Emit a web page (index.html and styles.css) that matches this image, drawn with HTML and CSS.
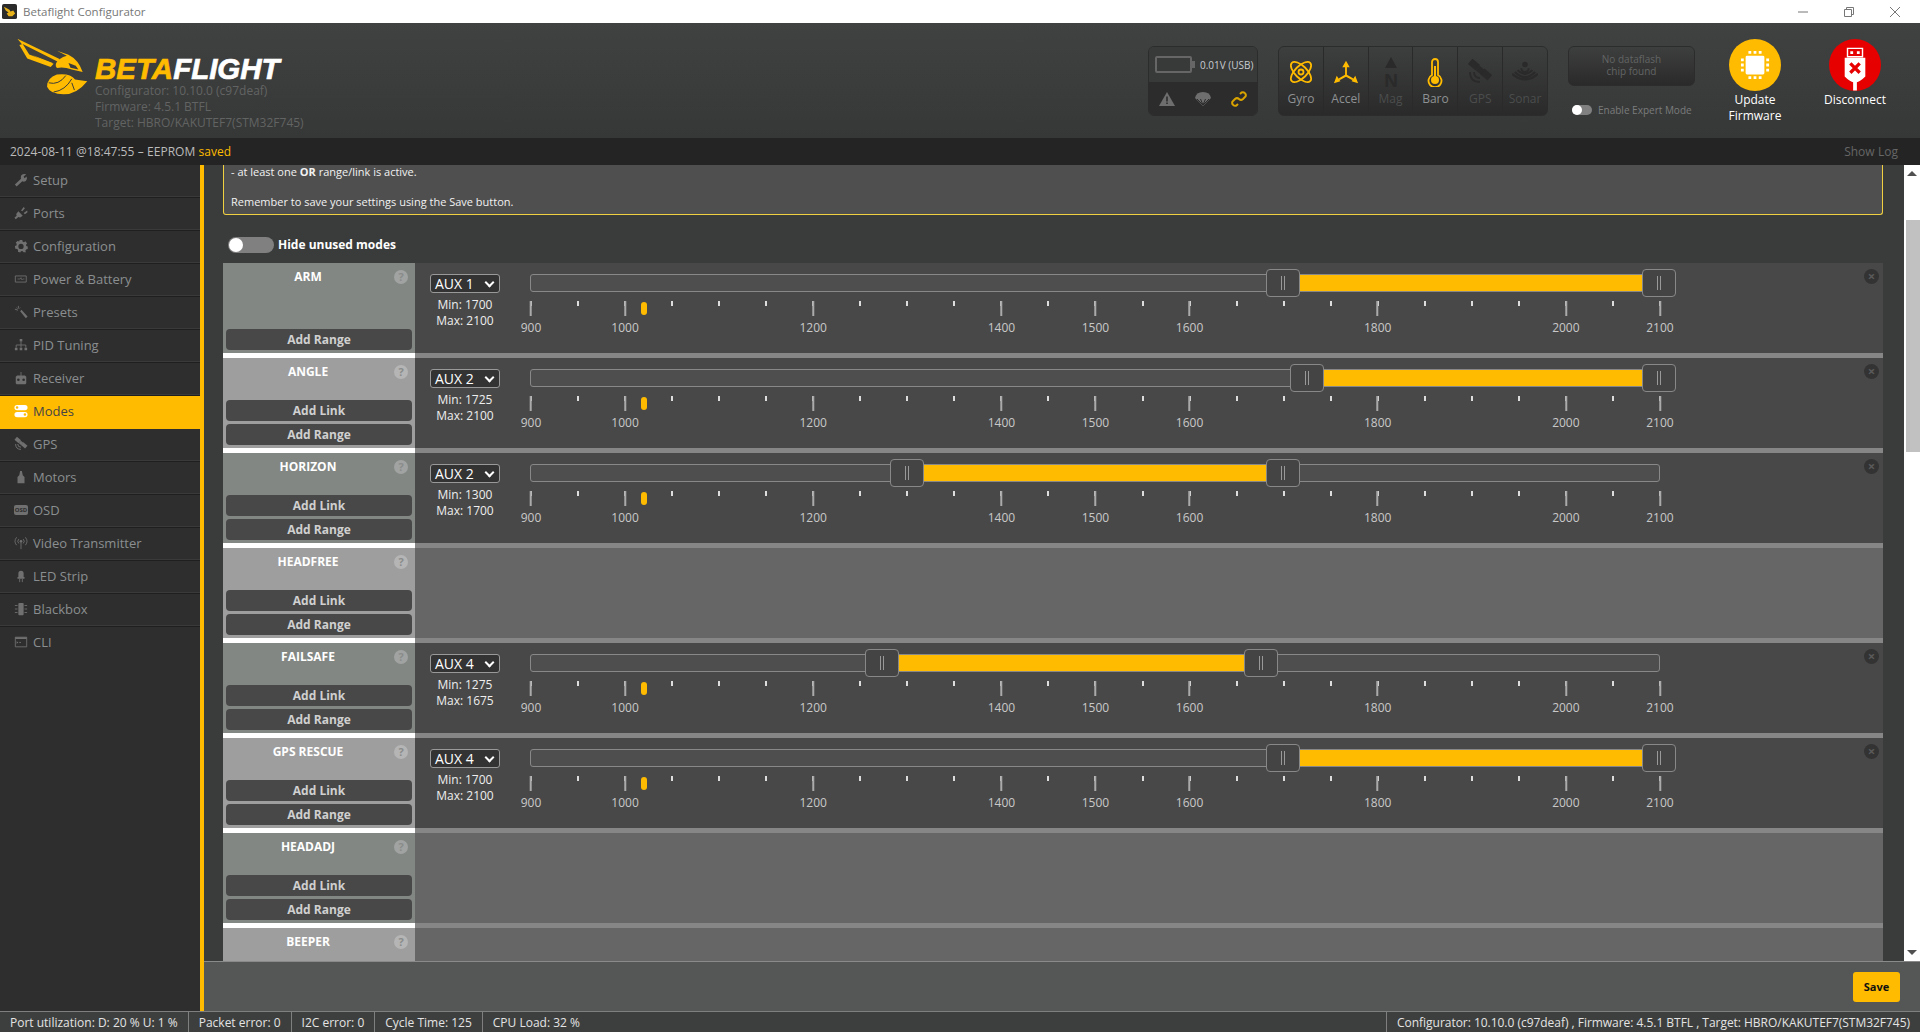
FILE: index.html
```html
<!DOCTYPE html>
<html lang="en">
<head>
    <meta charset="UTF-8">
    <title>Betaflight Configurator</title>
    <link rel="stylesheet" href="styles.css">
</head>
<body>

    <div class="titlebar">
        <svg class="app-icon" viewBox="0 0 16 16"><rect width="16" height="16" rx="2" fill="#2b2b2b"/><path d="M2 3l6 3 1 2 3-1 2 3-3 3H7L5 10l2-1-3-2z" fill="#e8b21a"/></svg>
        <span class="app-title">Betaflight Configurator</span>
        <div class="window-controls">
            <svg viewBox="0 0 12 12"><path d="M1 6h10" stroke="#777" fill="none"/></svg>
            <svg viewBox="0 0 12 12"><path d="M1.500 3.500h7v7h-7zM3.500 3.500v-2h7v7h-2" stroke="#777" fill="none"/></svg>
            <svg viewBox="0 0 12 12"><path d="M1 1l10 10M11 1L1 11" stroke="#777" fill="none"/></svg>
        </div>
    </div>

    <header class="header">
        <div class="brand">
            <svg class="bee" viewBox="40 105 230 185">
                <path d="M50 116l128 62-5 8L66 132l20 32 74 28-9 10-71-26-24-41 8-2z" fill="#ffbb00"/>
                <path d="M95 166l62 24-5 5z" fill="#ffbb00"/>
                <path d="M170 153l35 12q30 15 43 52l-33-7q-25-10-45-5-10-10 5-25 15-10 25-12z" fill="#ffbb00"/>
                <path d="M205 190l22 8 8 12-24-6z" fill="#3a3c3b"/>
                <path d="M262 245q-32 40-72 40-40 0-50-23 0-27 30-37 40-5 55 15z" fill="#ffbb00"/>
                <path d="M145 250q30 8 52-22M160 278q35-5 55-40M215 250l8 22" stroke="#3a3c3b" stroke-width="3" fill="none"/>
            </svg>
            <div class="brand-text">
                <div class="wordmark"><span class="beta">BETA</span>FLIGHT</div>
                <div class="versions">
                    <div>Configurator: 10.10.0 (c97deaf)</div>
                    <div>Firmware: 4.5.1 BTFL</div>
                    <div>Target: HBRO/KAKUTEF7(STM32F745)</div>
                </div>
            </div>
        </div>

        <div class="battery-panel">
            <div class="battery-top">
                <div class="battery"></div>
                <span>0.01V (USB)</span>
            </div>
            <div class="battery-bottom">
                <svg viewBox="0 0 16 16"><path d="M8 1l8 14H0z" fill="#6e6e6e"/><path d="M7.200 5.500h1.600v5H7.200zM7.200 11.500h1.600v1.600H7.200z" fill="#2c2c2c"/></svg>
                <svg viewBox="0 0 16 16"><path d="M0 7Q1 1 8 1t8 6L8 15z" fill="#6e6e6e"/><path d="M2 8l6 6 6-6M5.500 8L8 14l2.500-6" stroke="#2c2c2c" fill="none"/></svg>
                <svg viewBox="0 0 16 16"><path d="M9 3l1.500-1.500a3 3 0 014 4L12 8a3 3 0 01-4 0M7 13l-1.500 1.500a3 3 0 01-4-4L4 8a3 3 0 014 0" stroke="#d9a300" stroke-width="2" fill="none"/></svg>
            </div>
        </div>

        <div class="sensors">
            <div class="sensor on">
                <svg viewBox="0 0 26 26"><g fill="none" stroke="#ffbb00" stroke-width="1.800"><ellipse cx="13" cy="13" rx="13" ry="6" transform="rotate(45 13 13)"/><ellipse cx="13" cy="13" rx="13" ry="6" transform="rotate(-45 13 13)"/><circle cx="13" cy="13" r="2.500"/></g></svg>
                Gyro
            </div>
            <div class="sensor on">
                <svg viewBox="0 0 28 26"><g fill="#ffbb00"><path d="M14 1l4 7h-8zM1 25l3-8 4 6zM27 25l-3-8-4 6z"/><path d="M13 7h2v9l7 4-1 2-7-4-7 4-1-2 7-4z"/></g></svg>
                Accel
            </div>
            <div class="sensor">
                <svg class="mag-icon" viewBox="0 0 26 34"><path d="M13 0l6 11H7z" fill="#2a2a2a"/><text x="13" y="30" class="mag-n">N</text></svg>
                Mag
            </div>
            <div class="sensor on">
                <svg viewBox="0 0 26 28"><path d="M10 17V4a3 3 0 016 0v13a6.500 6.500 0 11-6 0z" fill="none" stroke="#ffbb00" stroke-width="1.800"/><circle cx="13" cy="22" r="4" fill="#ffbb00"/><path d="M12 8h2v12h-2z" fill="#ffbb00"/></svg>
                Baro
            </div>
            <div class="sensor">
                <svg viewBox="0 0 26 26"><use href="#sat" fill="#2a2a2a" stroke="#2a2a2a"/></svg>
                GPS
            </div>
            <div class="sensor">
                <svg viewBox="0 0 28 24"><g fill="none" stroke="#2a2a2a" stroke-width="2.200"><path d="M10 8a4 4 0 008 0M6 10q8 8 16 0M3 12q11 11 22 0M0 14q14 12 28 0"/></g><circle cx="14" cy="4" r="3" fill="#2a2a2a"/></svg>
                Sonar
            </div>
        </div>

        <div class="flash-col">
            <div class="dataflash">No dataflash<br>chip found</div>
            <div class="expert">
                <span class="expert-toggle"></span>
                Enable Expert Mode
            </div>
        </div>

        <div class="round-btn">
            <div class="circle update">
                <svg viewBox="0 0 32 32"><rect x="6" y="6" width="20" height="20" rx="1.500" fill="#fff"/><path d="M9 1h3v3H9zM14.500 1h3v3h-3zM20 1h3v3h-3zM9 28h3v3H9zM14.500 28h3v3h-3zM20 28h3v3h-3zM1 9h3v3H1zM1 14.500h3v3H1zM1 20h3v3H1zM28 9h3v3h-3zM28 14.500h3v3h-3zM28 20h3v3h-3z" fill="#fff"/></svg>
            </div>
            Update<br>Firmware
        </div>
        <div class="round-btn">
            <div class="circle disconnect">
                <svg viewBox="0 0 32 46"><path d="M8 1h16v9H8z" fill="none" stroke="#fff" stroke-width="1.500"/><path d="M11 4h3v3h-3zM18 4h3v3h-3zM5 11h22v20q-5 5-9 6v9h-4v-9q-4-1-9-6z" fill="#fff"/><path d="M11 17l10 10M21 17L11 27" stroke="#e60000" stroke-width="3.500"/></svg>
            </div>
            Disconnect
        </div>
    </header>

    <div class="logbar">
        <span>2024-08-11 @18:47:55 &ndash; EEPROM <em>saved</em></span>
        <span class="show-log">Show Log</span>
    </div>

    <svg class="defs">
        <symbol id="sat" viewBox="0 0 26 26">
            <rect stroke-width="0" x="2" y="2" width="10" height="7" transform="rotate(40 7 5.500)"/>
            <rect stroke-width="0" x="14" y="12" width="10" height="7" transform="rotate(40 19 15.500)"/>
            <rect stroke-width="0" x="10" y="8" width="6" height="6" transform="rotate(40 13 11)"/>
            <path d="M7 13q0 6 6 6M3 13q0 10 10 10" fill="none" stroke-width="1.800"/>
        </symbol>
    </svg>

    <div class="main">
        <nav class="sidebar">
            <a class="tab"><svg viewBox="0 0 16 16"><path d="M1 13L8 6.500Q7 3 10 1.500q2-.8 4 0L11 4l1 2 2.500-2q1 3-1 5-2 1.500-4 .5L3 15.500z"/></svg>Setup</a>
            <a class="tab"><svg viewBox="0 0 16 16"><path d="M5 6l5 5-3 2-2-.5L2 15l-1.500-1.500L3 11l-.5-2zM8 5l3-4 1.500 1.500L9.500 6zM11 8l4-3 .5 2-3 2.500z"/></svg>Ports</a>
            <a class="tab"><svg viewBox="0 0 16 16"><path fill-rule="evenodd" d="M6.500 1h3l.4 2 1.500.7L13 2.500 15 5l-1.300 1.500.3 1.500 1.700.5v3l-1.900.5-.8 1.400.6 1.600L11 15l-1.500-1.200-1.500.2-1 1.500-2.500-1 .2-2-1.100-1L1.500 11 1 8l1.800-.7.3-1.500L2 4l2.500-2 1.300 1.200z M8 5.500a3 3 0 100 6 3 3 0 000-6z"/></svg>Configuration</a>
            <a class="tab"><svg viewBox="0 0 16 16"><path fill="none" stroke="#707070" d="M1.500 4.500h12.500v7H1.500z"/><path fill="none" stroke="#707070" stroke-width=".8" d="M4 8h3l1-1.500L9 9l1-1h2"/></svg>Power &amp; Battery</a>
            <a class="tab"><svg viewBox="0 0 16 16"><path d="M7 7l1.500-1.500 7 7.500-2 2z"/><path d="M5 1v3M1 5h3M7 3l-1 1M3 3l1 1M3 7l1-1" stroke="#707070" fill="none"/></svg>Presets</a>
            <a class="tab"><svg viewBox="0 0 16 16"><path d="M6.500 1h3v3h-3zM1 11h3v3H1zM6.500 11h3v3h-3zM12 11h3v3h-3z"/><path d="M8 4v7M2.500 11V8h11v3" fill="none" stroke="#707070"/></svg>PID Tuning</a>
            <a class="tab"><svg viewBox="0 0 16 16"><path fill-rule="evenodd" d="M7.500 1h1v4h4l1.500 1.500V14l-1 1H3l-1-1V6.500L3.500 5h4zM5 8.500a1.500 1.500 0 100 3 1.500 1.500 0 000-3zm6 0a1.500 1.500 0 100 3 1.500 1.500 0 000-3z"/></svg>Receiver</a>
            <a class="tab active"><svg viewBox="0 0 16 16"><path fill="#fff" fill-rule="evenodd" d="M3.500 1h9a3 3 0 010 6h-9a3 3 0 010-6zm0 1.500a1.500 1.500 0 100 3 1.500 1.500 0 000-3zM3.500 9h9a3 3 0 010 6h-9a3 3 0 010-6zm9 1.500a1.500 1.500 0 100 3 1.500 1.500 0 000-3z"/></svg>Modes</a>
            <a class="tab"><svg viewBox="0 0 26 26"><use href="#sat" stroke="#707070"/></svg>GPS</a>
            <a class="tab"><svg viewBox="0 0 16 16"><path d="M7 1h2l1 5 2 2v7H4V8l2-2z"/></svg>Motors</a>
            <a class="tab"><span class="osd-icon">OSD</span>OSD</a>
            <a class="tab"><svg viewBox="0 0 16 16"><circle cx="8" cy="6" r="1.500"/><path d="M8 7v8M5.500 3.500a3.500 3.500 0 000 5M10.500 3.500a3.500 3.500 0 010 5M3 1.500a7 7 0 000 9M13 1.500a7 7 0 010 9" fill="none" stroke="#707070"/></svg>Video Transmitter</a>
            <a class="tab"><svg viewBox="0 0 16 16"><path d="M5 5a3 3 0 016 0v4H5zM4 9h8v2H4z"/><path d="M6.500 11v4M9.500 11v4" stroke="#707070" fill="none"/></svg>LED Strip</a>
            <a class="tab"><svg viewBox="0 0 16 16"><rect x="5" y="1" width="6" height="14" rx="1"/><path d="M1 4h3M1 8h3M1 12h3M12 4h3M12 8h3M12 12h3" stroke="#707070" fill="none"/></svg>Blackbox</a>
            <a class="tab"><svg viewBox="0 0 16 16"><path fill="none" stroke="#707070" d="M1.500 2.500h13v11h-13z"/><path d="M1.500 2.500h13v2h-13zM3 7l2 1.500L3 10z"/><path d="M6 8.500h2" stroke="#707070"/></svg>CLI</a>
        </nav>

        <div class="tab-area">
            <div class="tab-scroll">
                <div class="content">
                    <div class="note">
                        <p>- at least one <strong>OR</strong> range/link is active.</p>
                        <p class="note-last">Remember to save your settings using the Save button.</p>
                    </div>

                    <div class="hide-unused">
                        <span class="switch"></span>
                        <strong>Hide unused modes</strong>
                    </div>

                    <div class="mode">
                        <div class="mode-name">
                            <div class="name">ARM</div><span class="help">?</span>
                            <div class="mode-btns"><div class="btn">Add Range</div></div>
                        </div>
                        <div class="mode-range">
                            <div class="channel">
                                <div class="aux">AUX 1<i class="chevron"></i></div>
                                <div class="minmax">Min: 1700<br>Max: 2100</div>
                            </div>
                            <div class="slider">
                                <div class="track">
                                    <div class="connect" style="left: 66.67%; right: 0"></div>
                                    <div class="handle" style="left: 66.67%"></div>
                                    <div class="handle" style="left: 100%"></div>
                                </div>
                                <div class="scale">
                                    <span class="marker"></span>
                                    <span class="pip p900">900</span><span class="pip p1000">1000</span><span class="pip p1200">1200</span><span class="pip p1400">1400</span><span class="pip p1500">1500</span><span class="pip p1600">1600</span><span class="pip p1800">1800</span><span class="pip p2000">2000</span><span class="pip p2100">2100</span>
                                </div>
                            </div>
                            <span class="remove">&times;</span>
                        </div>
                    </div>

                    <div class="mode">
                        <div class="mode-name">
                            <div class="name">ANGLE</div><span class="help">?</span>
                            <div class="mode-btns"><div class="btn">Add Link</div><div class="btn">Add Range</div></div>
                        </div>
                        <div class="mode-range">
                            <div class="channel">
                                <div class="aux">AUX 2<i class="chevron"></i></div>
                                <div class="minmax">Min: 1725<br>Max: 2100</div>
                            </div>
                            <div class="slider">
                                <div class="track">
                                    <div class="connect" style="left: 68.75%; right: 0"></div>
                                    <div class="handle" style="left: 68.75%"></div>
                                    <div class="handle" style="left: 100%"></div>
                                </div>
                                <div class="scale">
                                    <span class="marker"></span>
                                    <span class="pip p900">900</span><span class="pip p1000">1000</span><span class="pip p1200">1200</span><span class="pip p1400">1400</span><span class="pip p1500">1500</span><span class="pip p1600">1600</span><span class="pip p1800">1800</span><span class="pip p2000">2000</span><span class="pip p2100">2100</span>
                                </div>
                            </div>
                            <span class="remove">&times;</span>
                        </div>
                    </div>

                    <div class="mode">
                        <div class="mode-name">
                            <div class="name">HORIZON</div><span class="help">?</span>
                            <div class="mode-btns"><div class="btn">Add Link</div><div class="btn">Add Range</div></div>
                        </div>
                        <div class="mode-range">
                            <div class="channel">
                                <div class="aux">AUX 2<i class="chevron"></i></div>
                                <div class="minmax">Min: 1300<br>Max: 1700</div>
                            </div>
                            <div class="slider">
                                <div class="track">
                                    <div class="connect" style="left: 33.33%; right: 33.33%"></div>
                                    <div class="handle" style="left: 33.33%"></div>
                                    <div class="handle" style="left: 66.67%"></div>
                                </div>
                                <div class="scale">
                                    <span class="marker"></span>
                                    <span class="pip p900">900</span><span class="pip p1000">1000</span><span class="pip p1200">1200</span><span class="pip p1400">1400</span><span class="pip p1500">1500</span><span class="pip p1600">1600</span><span class="pip p1800">1800</span><span class="pip p2000">2000</span><span class="pip p2100">2100</span>
                                </div>
                            </div>
                            <span class="remove">&times;</span>
                        </div>
                    </div>

                    <div class="mode unused">
                        <div class="mode-name">
                            <div class="name">HEADFREE</div><span class="help">?</span>
                            <div class="mode-btns"><div class="btn">Add Link</div><div class="btn">Add Range</div></div>
                        </div>
                        <div class="mode-range"></div>
                    </div>

                    <div class="mode">
                        <div class="mode-name">
                            <div class="name">FAILSAFE</div><span class="help">?</span>
                            <div class="mode-btns"><div class="btn">Add Link</div><div class="btn">Add Range</div></div>
                        </div>
                        <div class="mode-range">
                            <div class="channel">
                                <div class="aux">AUX 4<i class="chevron"></i></div>
                                <div class="minmax">Min: 1275<br>Max: 1675</div>
                            </div>
                            <div class="slider">
                                <div class="track">
                                    <div class="connect" style="left: 31.15%; right: 35.32%"></div>
                                    <div class="handle" style="left: 31.15%"></div>
                                    <div class="handle" style="left: 64.68%"></div>
                                </div>
                                <div class="scale">
                                    <span class="marker"></span>
                                    <span class="pip p900">900</span><span class="pip p1000">1000</span><span class="pip p1200">1200</span><span class="pip p1400">1400</span><span class="pip p1500">1500</span><span class="pip p1600">1600</span><span class="pip p1800">1800</span><span class="pip p2000">2000</span><span class="pip p2100">2100</span>
                                </div>
                            </div>
                            <span class="remove">&times;</span>
                        </div>
                    </div>

                    <div class="mode">
                        <div class="mode-name">
                            <div class="name">GPS RESCUE</div><span class="help">?</span>
                            <div class="mode-btns"><div class="btn">Add Link</div><div class="btn">Add Range</div></div>
                        </div>
                        <div class="mode-range">
                            <div class="channel">
                                <div class="aux">AUX 4<i class="chevron"></i></div>
                                <div class="minmax">Min: 1700<br>Max: 2100</div>
                            </div>
                            <div class="slider">
                                <div class="track">
                                    <div class="connect" style="left: 66.67%; right: 0"></div>
                                    <div class="handle" style="left: 66.67%"></div>
                                    <div class="handle" style="left: 100%"></div>
                                </div>
                                <div class="scale">
                                    <span class="marker"></span>
                                    <span class="pip p900">900</span><span class="pip p1000">1000</span><span class="pip p1200">1200</span><span class="pip p1400">1400</span><span class="pip p1500">1500</span><span class="pip p1600">1600</span><span class="pip p1800">1800</span><span class="pip p2000">2000</span><span class="pip p2100">2100</span>
                                </div>
                            </div>
                            <span class="remove">&times;</span>
                        </div>
                    </div>

                    <div class="mode unused">
                        <div class="mode-name">
                            <div class="name">HEADADJ</div><span class="help">?</span>
                            <div class="mode-btns"><div class="btn">Add Link</div><div class="btn">Add Range</div></div>
                        </div>
                        <div class="mode-range"></div>
                    </div>

                    <div class="mode unused">
                        <div class="mode-name">
                            <div class="name">BEEPER</div><span class="help">?</span>
                        </div>
                        <div class="mode-range"></div>
                    </div>
                </div>

                <div class="scrollbar">
                    <span class="arrow-up"></span>
                    <span class="thumb"></span>
                    <span class="arrow-down"></span>
                </div>
            </div>

            <div class="toolbar">
                <div class="save">Save</div>
            </div>
        </div>
    </div>

    <footer class="statusbar">
        <span>Port utilization: D: 20 % U: 1 %</span>
        <span>Packet error: 0</span>
        <span>I2C error: 0</span>
        <span>Cycle Time: 125</span>
        <span class="last">CPU Load: 32 %</span>
        <span class="build">Configurator: 10.10.0 (c97deaf) , Firmware: 4.5.1 BTFL , Target: HBRO/KAKUTEF7(STM32F745)</span>
    </footer>

</body>
</html>
```

FILE: styles.css
```css
body {
    font-family: "Open Sans", sans-serif;
    font-size: 12px;
    margin: 0;
    height: 1032px;
    overflow: hidden;
    display: flex;
    flex-direction: column;
    background-color: #3a3c3b;
}

/* window frame */
.titlebar {
    height: 23px;
    flex: none;
    background-color: #fff;
    display: flex;
    align-items: center;
    padding-left: 2px;
    color: #777;
}

.app-icon {
    width: 15px;
    height: 15px;
    margin-right: 6px;
}

.app-title {
    font-size: 11.500px;
}

.window-controls {
    margin-left: auto;
    display: flex;
    gap: 34px;
    padding-right: 19px;
}

.window-controls svg {
    width: 12px;
    height: 12px;
}

.defs {
    display: none;
}

/* header */
.header {
    height: 115px;
    flex: none;
    display: flex;
    background: linear-gradient(#404241, #363737);
    color: #fff;
    box-sizing: border-box;
    padding-right: 15px;
}

.brand {
    display: flex;
    margin-right: auto;
    padding-left: 14px;
}

.bee {
    width: 76px;
    height: 61px;
    margin-top: 12px;
    margin-right: 5px;
}

.brand-text {
    padding-top: 31px;
}

.wordmark {
    font-family: "Liberation Sans", sans-serif;
    font-weight: bold;
    font-style: italic;
    font-size: 29.500px;
    line-height: 30px;
    -webkit-text-stroke: 0.7px currentColor;
    height: 29px;
}

.beta {
    color: #ffbb00;
}

.versions {
    color: #626463;
    line-height: 16px;
}

.battery-panel {
    width: 110px;
    height: 70px;
    margin-top: 23px;
    margin-right: 20px;
    border-radius: 6px;
    border: 1px solid #2c2c2c;
    box-sizing: border-box;
    overflow: hidden;
}

.battery-top {
    height: 35px;
    display: flex;
    align-items: center;
    padding-left: 6px;
    font-size: 10px;
    color: #c8ccd0;
    background-color: #383a39;
}

.battery {
    width: 33px;
    height: 13px;
    border: 2px solid #666;
    border-radius: 2px;
    margin-right: 8px;
    position: relative;
}

.battery::after {
    content: "";
    position: absolute;
    right: -5px;
    top: 3px;
    width: 3px;
    height: 7px;
    background-color: #666;
}

.battery-bottom {
    height: 34px;
    background-color: #2c2c2c;
    display: flex;
    align-items: center;
    justify-content: space-between;
    padding: 0 10px;
}

.battery-bottom svg {
    width: 16px;
    height: 16px;
}

.sensors {
    width: 270px;
    height: 70px;
    margin-top: 23px;
    margin-right: 20px;
    display: flex;
    border-radius: 6px;
    border: 1px solid #2c2c2c;
    box-sizing: border-box;
    background: linear-gradient(#3d3f3e, #2a2a2a);
    overflow: hidden;
}

.sensor {
    flex: 1;
    display: flex;
    flex-direction: column;
    align-items: center;
    color: #4b4d4d;
    border-left: 1px solid #2a2a2a;
    padding-top: 10px;
}

.sensor:first-child {
    border-left: none;
}

.sensor.on {
    color: #8e9193;
}

.sensor svg {
    width: 26px;
    height: 30px;
    margin-bottom: 3px;
    fill: #2a2a2a;
}

.sensor .mag-icon {
    height: 34px;
    margin-bottom: -1px;
}

.mag-n {
    font-family: "Liberation Sans", sans-serif;
    font-weight: bold;
    font-size: 19px;
    text-anchor: middle;
    fill: #2a2a2a;
}

.flash-col {
    width: 127px;
    margin-top: 23px;
    margin-right: 10px;
}

.dataflash {
    height: 40px;
    box-sizing: border-box;
    border: 1px solid #2c2c2c;
    border-radius: 6px;
    background: linear-gradient(#3d3f3e, #2a2a2a);
    color: #636565;
    font-size: 10px;
    line-height: 12px;
    text-align: center;
    padding-top: 6px;
}

.expert {
    display: flex;
    align-items: center;
    margin-top: 17px;
    padding-left: 4px;
    font-size: 10px;
    color: #7a7c7c;
}

.expert-toggle {
    width: 20px;
    height: 10px;
    border-radius: 5px;
    background-color: #808080;
    margin-right: 6px;
    position: relative;
}

.expert-toggle::after {
    content: "";
    position: absolute;
    left: 0;
    top: 0;
    width: 10px;
    height: 10px;
    border-radius: 50%;
    background-color: #fff;
}

.round-btn {
    width: 100px;
    text-align: center;
    line-height: 16px;
    padding-top: 16px;
    font-size: 12px;
}

.circle {
    width: 52px;
    height: 52px;
    border-radius: 50%;
    margin: 0 auto 1px;
    display: flex;
    align-items: center;
    justify-content: center;
}

.update {
    background-color: #ffbb00;
}

.update svg {
    width: 30px;
    height: 30px;
}

.disconnect {
    background-color: #e60000;
    align-items: flex-end;
}

.disconnect svg {
    width: 30px;
    height: 44px;
}

/* log line */
.logbar {
    height: 27px;
    flex: none;
    background-color: #242424;
    color: #bbb;
    display: flex;
    justify-content: space-between;
    align-items: center;
    padding: 0 22px 0 10px;
    word-spacing: 0.3px;
}

.logbar em {
    font-style: normal;
    color: #ffbb00;
}

.show-log {
    color: #666;
}

/* main area */
.main {
    flex: 1;
    display: flex;
    min-height: 0;
}

.sidebar {
    width: 200px;
    flex: none;
    background-color: #2e2e2e;
    border-right: 4px solid #ffbb00;
}

.tab {
    height: 33px;
    box-sizing: border-box;
    display: flex;
    align-items: center;
    padding: 0 0 2px 14px;
    font-size: 13px;
    color: #8b8e90;
    border-bottom: 1px solid #1f1f1f;
    box-shadow: inset 0 -1px 0 #3a3a3a;
}

.tab svg {
    width: 14px;
    height: 14px;
    margin-right: 5px;
    fill: #707070;
    flex: none;
}

.tab:last-child {
    border-bottom: none;
    box-shadow: none;
    padding-bottom: 4px;
}

.tab.active {
    background-color: #ffbb00;
    width: 204px;
    color: #444;
    border-bottom: none;
    box-shadow: none;
    padding-bottom: 4px;
}

.osd-icon {
    width: 14px;
    height: 10px;
    margin-right: 5px;
    background-color: #707070;
    border-radius: 2px;
    color: #2e2e2e;
    font-size: 6px;
    font-weight: bold;
    line-height: 10px;
    text-align: center;
}

.tab-area {
    flex: 1;
    display: flex;
    flex-direction: column;
    min-width: 0;
}

.tab-scroll {
    flex: 1;
    display: flex;
    min-height: 0;
}

.content {
    flex: 1;
    padding: 0 21px 0 19px;
    overflow: hidden;
}

.note {
    height: 50px;
    box-sizing: border-box;
    display: flow-root;
    background-color: #4f4f4f;
    border: 1px solid #f0d040;
    border-top: none;
    border-radius: 0 0 3px 3px;
    padding-left: 7px;
    font-size: 11px;
    line-height: 15px;
    color: #f2f2f2;
}

.note p {
    margin: -1px 0 0;
}

.note .note-last {
    margin: 0;
    padding-top: 15px;
}

.hide-unused {
    height: 48px;
    box-sizing: border-box;
    display: flex;
    align-items: center;
    padding: 11px 0 0 5px;
    color: #fff;
}

.switch {
    width: 46px;
    height: 16px;
    border-radius: 8px;
    background-color: #808080;
    margin-right: 4px;
    position: relative;
}

.switch::after {
    content: "";
    position: absolute;
    left: 1px;
    top: 1px;
    width: 14px;
    height: 14px;
    border-radius: 50%;
    background-color: #fff;
}

/* mode rows */
.mode {
    height: 95px;
    display: flex;
}

.mode-name {
    width: 192px;
    flex: none;
    box-sizing: border-box;
    position: relative;
    background-color: #9e9e9e;
    border-bottom: 5px solid #fff;
    background-clip: padding-box;
    display: flex;
    flex-direction: column;
    color: #fff;
    font-weight: bold;
}

.mode:nth-child(odd) .mode-name {
    background-color: #828784;
}

.name {
    width: 170px;
    text-align: center;
    padding-top: 5px;
    line-height: 18px;
}

.help {
    position: absolute;
    right: 7px;
    top: 7px;
    width: 14px;
    height: 14px;
    border-radius: 50%;
    background-color: #b5b5b5;
    color: #8a8c8b;
    font-size: 11px;
    line-height: 14px;
    text-align: center;
}

.mode:nth-child(odd) .help {
    background-color: #a0a3a1;
}

.mode-btns {
    margin-top: auto;
    padding: 0 3px;
    margin-bottom: 3px;
}

.btn {
    height: 21px;
    border-radius: 4px;
    background-color: #484848;
    color: #d0d0d0;
    line-height: 21px;
    text-align: center;
    margin-top: 3px;
}

.mode-range {
    flex: 1;
    position: relative;
    box-sizing: border-box;
    display: flex;
    padding: 11px 0 0 15px;
    background-color: #484848;
    border-bottom: 5px solid #868686;
    color: #eee;
}

.unused .mode-range {
    background-color: #666;
}

.channel {
    width: 70px;
    margin-right: 30px;
    flex: none;
}

.aux {
    height: 19px;
    box-sizing: border-box;
    border: 1px solid #999;
    border-radius: 3px;
    background-color: #333;
    font-size: 14px;
    line-height: 17px;
    padding-left: 4px;
    color: #fff;
    position: relative;
}

.chevron {
    position: absolute;
    right: 6px;
    top: 4px;
    width: 5px;
    height: 5px;
    border-right: 2px solid #fff;
    border-bottom: 2px solid #fff;
    transform: rotate(45deg);
}

.minmax {
    text-align: center;
    line-height: 16px;
    margin-top: 4px;
}

.slider {
    width: 1130px;
}

.track {
    height: 18px;
    box-sizing: border-box;
    border: 1px solid #888;
    border-radius: 3px;
    background-color: #4e4e4e;
    position: relative;
}

.connect {
    position: absolute;
    top: 0;
    bottom: 0;
    background-color: #ffbb00;
}

.handle {
    position: absolute;
    top: -6px;
    width: 34px;
    height: 28px;
    margin-left: -17px;
    box-sizing: border-box;
    background-color: #444;
    border: 1px solid #888;
    border-radius: 4px;
    z-index: 1;
}

.handle::before {
    content: "";
    position: absolute;
    left: 14px;
    top: 6px;
    width: 2px;
    height: 14px;
    border-left: 1px solid #999;
    border-right: 1px solid #999;
}

.scale {
    position: relative;
    height: 40px;
    margin-top: 9px;
    background: repeating-linear-gradient(90deg, #ddd 0 2px, transparent 2px 47.04px) no-repeat 0 0 / 100% 5px;
}

.marker {
    position: absolute;
    left: 111px;
    top: 1px;
    width: 6px;
    height: 13px;
    border-radius: 3px;
    background-color: #ffbb00;
}

.pip {
    position: absolute;
    top: 19px;
    transform: translateX(-50%);
    line-height: 16px;
    color: #c8c8c8;
}

.pip::before {
    content: "";
    position: absolute;
    left: 50%;
    top: -19px;
    width: 2px;
    height: 15px;
    margin-left: -1px;
    background-color: #aaa;
}

.p900 { left: 1px; }
.p1000 { left: 95.08px; }
.p1200 { left: 283.24px; }
.p1400 { left: 471.4px; }
.p1500 { left: 565.48px; }
.p1600 { left: 659.56px; }
.p1800 { left: 847.72px; }
.p2000 { left: 1035.88px; }
.p2100 { left: 1129.96px; }

.remove {
    position: absolute;
    left: 1449px;
    top: 6px;
    width: 15px;
    height: 15px;
    border-radius: 50%;
    background-color: #333;
    color: #5a5a5a;
    font-size: 13px;
    font-weight: bold;
    line-height: 15px;
    text-align: center;
}

.scrollbar {
    width: 16px;
    flex: none;
    background-color: #fff;
    position: relative;
}

.thumb {
    position: absolute;
    left: 2px;
    right: 0;
    top: 55px;
    height: 232px;
    background-color: #c1c1c1;
}

.arrow-up,
.arrow-down {
    position: absolute;
    left: 3px;
    border-left: 5px solid transparent;
    border-right: 5px solid transparent;
}

.arrow-up {
    top: 6px;
    border-bottom: 5px solid #505050;
}

.arrow-down {
    bottom: 6px;
    border-top: 5px solid #505050;
}

.toolbar {
    height: 50px;
    flex: none;
    box-sizing: border-box;
    background-color: #555756;
    border-top: 1px solid #8a8a8a;
    display: flex;
    justify-content: flex-end;
    align-items: center;
    padding-right: 20px;
}

.save {
    width: 47px;
    height: 30px;
    border-radius: 3px;
    background-color: #ffbb00;
    color: #111;
    font-size: 11px;
    font-weight: bold;
    line-height: 30px;
    text-align: center;
}

/* status bar */
.statusbar {
    height: 21px;
    flex: none;
    box-sizing: border-box;
    background-color: #3d3f3e;
    border-top: 1px solid #7f7f7f;
    display: flex;
    color: #e4e4e4;
    line-height: 21px;
    white-space: nowrap;
}

.statusbar span {
    padding: 0 10px;
    border-right: 1px solid #7f7f7f;
}

.statusbar .last {
    border-right: none;
}

.statusbar .build {
    margin-left: auto;
    border-right: none;
    border-left: 1px solid #7f7f7f;
    letter-spacing: -0.03px;
}
```
